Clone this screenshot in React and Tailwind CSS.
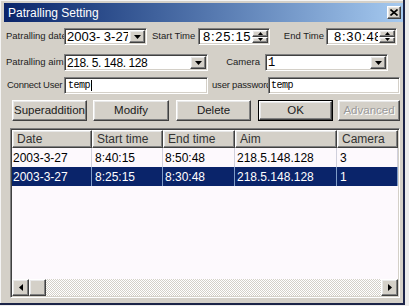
import React from 'react';

const sunken =
  'border border-t-[#808080] border-l-[#808080] border-b-white border-r-white shadow-[inset_1px_1px_0_#404040,inset_-1px_-1px_0_#d4d0c8]';
const raised =
  'bg-[#d4d0c8] border border-t-white border-l-white border-b-[#404040] border-r-[#404040] shadow-[inset_-1px_-1px_0_#808080,inset_1px_1px_0_#e8e8e8]';

const sans = { fontFamily: '"Liberation Sans", Arial, sans-serif' };
const mono = { fontFamily: '"Liberation Mono", "Courier New", monospace' };

// small black triangles used in combo, spin and scroll buttons
function Tri({ dir = 'down', size = 7 }) {
  const pts = {
    down: '0,0 7,0 3.5,4',
    up: '0,4 7,4 3.5,0',
    left: '4,0 4,7 0,3.5',
    right: '0,0 0,7 4,3.5',
  }[dir];
  const vert = dir === 'down' || dir === 'up';
  return (
    <svg width={vert ? size : 4} height={vert ? 4 : size} viewBox={vert ? '0 0 7 4' : '0 0 4 7'}>
      <polygon points={pts} fill="#000" />
    </svg>
  );
}

function Combo({ className, children }) {
  return (
    <div className={`relative flex h-[17px] items-stretch bg-white ${sunken} ${className}`}>
      <div className="flex flex-1 items-center overflow-hidden whitespace-nowrap pl-[2px]">{children}</div>
      <div className={`m-[1px] flex w-[16px] items-center justify-center ${raised}`}>
        <Tri dir="down" />
      </div>
    </div>
  );
}

function Spin({ className, text, pad }) {
  return (
    <div className={`relative flex h-[17px] items-stretch bg-white ${sunken} ${className}`}>
      <div className={`flex flex-1 items-center overflow-hidden whitespace-nowrap text-[13px] tracking-[0.7px] text-black ${pad}`} style={sans}>
        {text}
      </div>
      <div className="m-[1px] flex w-[16px] flex-col">
        <div className={`flex flex-1 items-center justify-center ${raised}`}>
          <svg width="5" height="3" viewBox="0 0 5 3"><polygon points="0,3 5,3 2.5,0" fill="#000" /></svg>
        </div>
        <div className={`flex flex-1 items-center justify-center ${raised}`}>
          <svg width="5" height="3" viewBox="0 0 5 3"><polygon points="0,0 5,0 2.5,3" fill="#000" /></svg>
        </div>
      </div>
    </div>
  );
}

function Label({ className, children }) {
  return (
    <div className={`flex items-center overflow-hidden whitespace-nowrap text-[9.5px] text-[#222] ${className}`} style={sans}>
      {children}
    </div>
  );
}

function Btn({ className, children, disabled, isDefault }) {
  const inner = (
    <div className={`flex h-full w-full items-center justify-center text-[11.5px] ${raised}`} style={sans}>
      <span className={disabled ? 'text-[#9a9a9a] [text-shadow:1px_1px_0_#fff]' : 'text-[#1a1a1a]'}>{children}</span>
    </div>
  );
  if (isDefault) {
    return <div className={`h-[21px] border border-black ${className}`}>{inner}</div>;
  }
  return <div className={`h-[21px] ${className}`}>{inner}</div>;
}

const cols = [
  { name: 'Date', w: 'w-[80px]', pl: 'pl-[1px]' },
  { name: 'Start time', w: 'w-[71px]', pl: 'pl-[3px]' },
  { name: 'End time', w: 'w-[72px]', pl: 'pl-[2px]' },
  { name: 'Aim', w: 'w-[102px]', pl: 'pl-[2px]' },
  { name: 'Camera', w: 'w-[61px]', pl: 'pl-[3px]' },
];

const rows = [
  ['2003-3-27', '8:40:15', '8:50:48', '218.5.148.128', '3'],
  ['2003-3-27', '8:25:15', '8:30:48', '218.5.148.128', '1'],
];

export default function App() {
  return (
    <div className="h-[306px] w-[409px] overflow-hidden bg-[#ececec]">
      <div className="flex h-[305px] w-[405px] flex-col bg-[#d4d0c8] shadow-[inset_-2px_-2px_0_#1c2448,inset_1px_1px_0_#f4f4f4]">
        {/* title bar */}
        <div className="ml-[4px] mt-[3px] flex h-[19px] w-[399px] items-center justify-between bg-linear-to-r from-[#0a246a] to-[#a6caf0] pl-[4px] pr-[2px]">
          <span className="text-[12px] text-white" style={sans}>Patralling Setting</span>
          <div className={`flex h-[13px] w-[14px] items-center justify-center ${raised}`}>
            <svg width="8" height="7" viewBox="0 0 8 7">
              <path d="M0.5 0.5 L7.5 6.5 M7.5 0.5 L0.5 6.5" stroke="#000" strokeWidth="1.6" />
            </svg>
          </div>
        </div>

        {/* row 1 */}
        <div className="mt-[6px] flex h-[17px] pl-[6px]">
          <Label className="w-[58px]">Patralling date</Label>
          <Combo className="w-[83px]">
            <span className="text-[13px] text-black" style={sans}>2003-&nbsp;3-27</span>
          </Combo>
          <Label className="w-[51px] pl-[5px]">Start Time</Label>
          <Spin className="w-[72px]" text="8:25:15" pad="pl-[4px]" />
          <Label className="w-[56px] justify-end pr-[2px]">End Time</Label>
          <Spin className="w-[71px]" text="8:30:48" pad="pl-[7px]" />
        </div>

        {/* row 2 */}
        <div className="mt-[9px] flex h-[17px] pl-[6px]">
          <Label className="w-[58px]">Patralling aim</Label>
          <Combo className="w-[144px]">
            <span className="text-[12px] tracking-[-0.4px] text-black" style={sans}>218.&nbsp;5.&nbsp;148.&nbsp;128</span>
          </Combo>
          <Label className="w-[57px] justify-end pr-[5px]">Camera</Label>
          <Combo className="w-[123px]">
            <span className="text-[12px] text-black" style={mono}>1</span>
          </Combo>
        </div>

        {/* row 3 */}
        <div className="mt-[6px] flex h-[17px] pl-[6px]">
          <Label className="w-[58px] pl-[1px] tracking-[-0.25px]">Connect User</Label>
          <div className={`flex w-[144px] items-center bg-white pl-[3px] ${sunken}`}>
            <span className="text-[10px] tracking-[-0.5px] text-black" style={mono}>temp</span>
            <span className="ml-[1px] h-[11px] w-[1px] bg-black" />
          </div>
          <Label className="w-[60px] pl-[4px] tracking-[-0.2px]">user password</Label>
          <div className={`flex w-[132px] items-center bg-white pl-[2px] ${sunken}`}>
            <span className="text-[10px] tracking-[-0.5px] text-black" style={mono}>temp</span>
          </div>
        </div>

        {/* buttons */}
        <div className="mt-[6px] flex pl-[12px]">
          <Btn className="w-[75px]">Superaddition</Btn>
          <Btn className="ml-[6px] w-[76px]">Modify</Btn>
          <Btn className="ml-[7px] w-[75px]">Delete</Btn>
          <Btn className="ml-[7px] w-[75px]" isDefault>OK</Btn>
          <Btn className="ml-[5px] w-[62px]" disabled>Advanced</Btn>
        </div>

        {/* list */}
        <div className={`ml-[10px] mt-[7px] flex h-[170px] w-[390px] flex-col bg-[#fdf9fd] p-[1px] ${sunken}`}>
          <div className="flex h-[18px]">
            {cols.map((c) => (
              <div key={c.name} className={`flex items-center pl-[4px] text-[12px] text-[#333] ${c.w} ${raised}`} style={sans}>
                {c.name}
              </div>
            ))}
          </div>
          {rows.map((r, i) => (
            <div key={i} className={`flex h-[19px] ${i === 1 ? 'bg-[#0a246a] text-white' : 'text-black'}`}>
              {r.map((v, j) => (
                <div
                  key={j}
                  className={`flex items-center border-r text-[12px] ${i === 1 ? 'border-r-[#7f9cc8]' : 'border-r-[#d0d0dc]'} ${cols[j].w} ${cols[j].pl}`}
                  style={sans}
                >
                  {v}
                </div>
              ))}
            </div>
          ))}
          <div className="flex-1" />
          <div className="flex h-[17px]">
            <div className={`flex w-[17px] items-center justify-center ${raised}`}>
              <Tri dir="left" />
            </div>
            <div className={`w-[17px] ${raised}`} />
            <div className="flex-1 bg-[repeating-conic-gradient(#d4d0c8_0_25%,#ffffff_0_50%)] bg-[length:2px_2px]" />
            <div className={`flex w-[17px] items-center justify-center ${raised}`}>
              <Tri dir="right" />
            </div>
          </div>
        </div>
      </div>
    </div>
  );
}
